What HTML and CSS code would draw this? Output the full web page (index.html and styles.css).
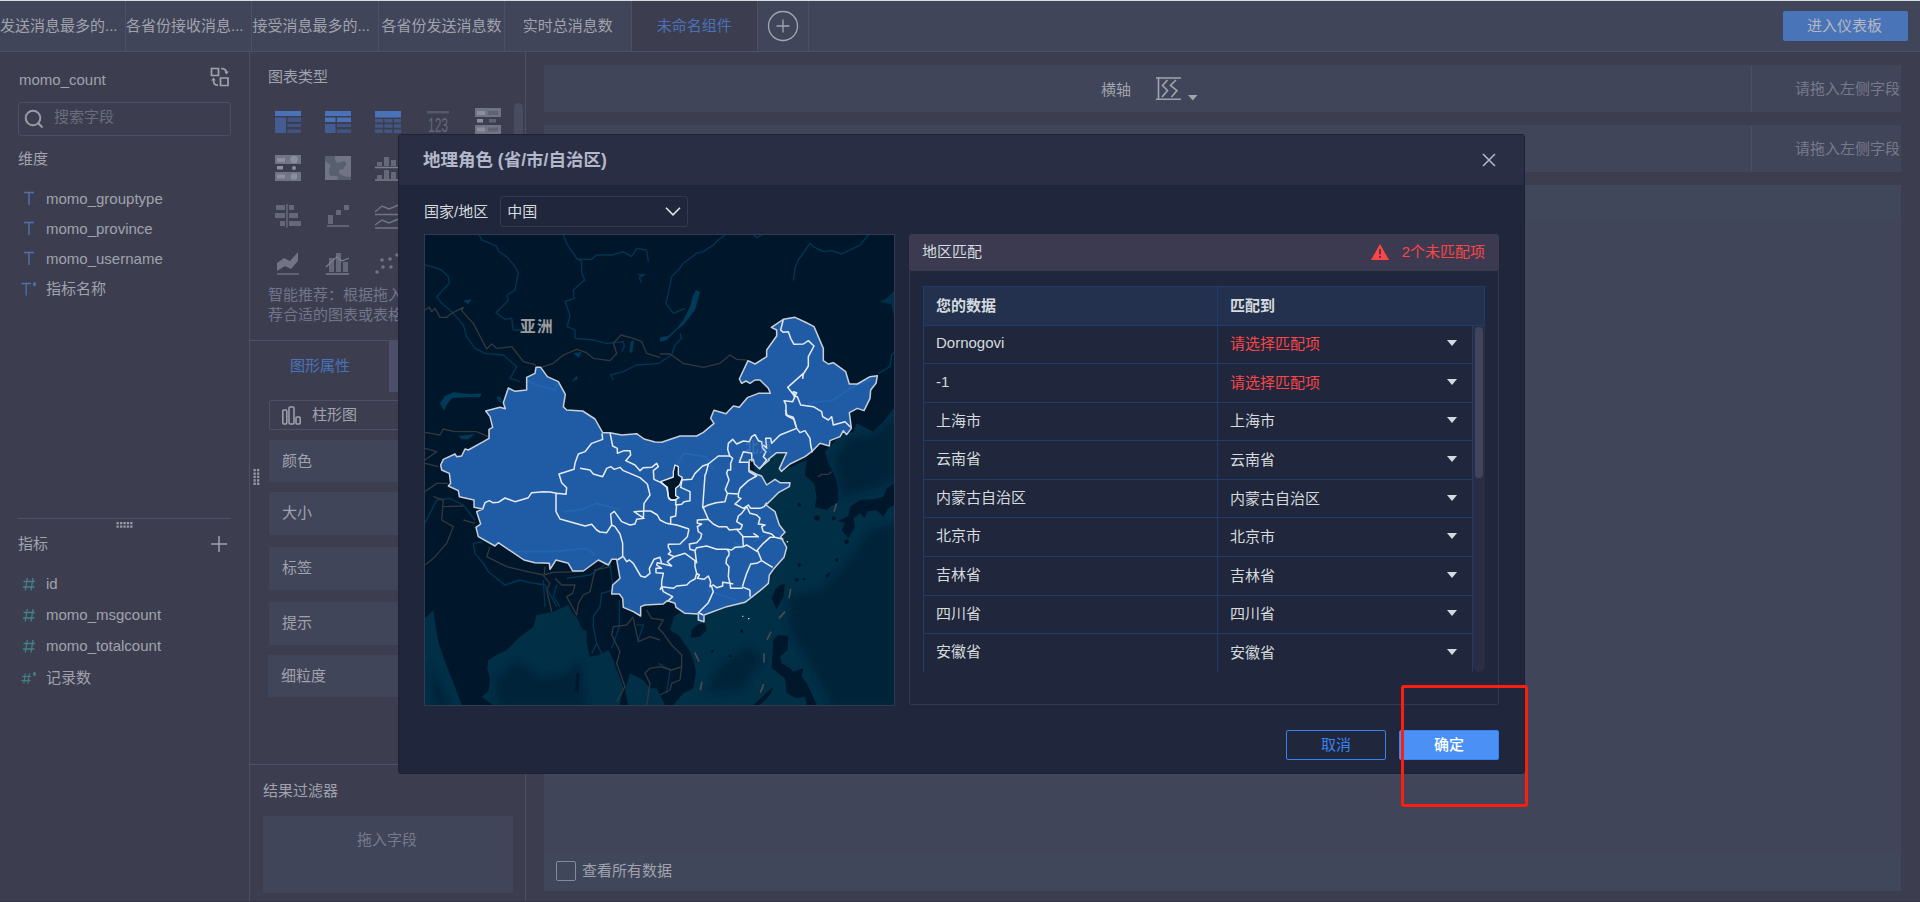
FILE: index.html
```
<!DOCTYPE html>
<html lang="zh-CN">
<head>
<meta charset="utf-8">
<title>未命名组件</title>
<link rel="stylesheet" href="styles.css">
</head>
<body>
<div class="app">
  <header class="topbar">
    <nav class="tabs">
      <div class="tab cut first">发送消息最多的...</div>
      <div class="tab cut">各省份接收消息...</div>
      <div class="tab cut">接受消息最多的...</div>
      <div class="tab">各省份发送消息数</div>
      <div class="tab">实时总消息数</div>
      <div class="tab active">未命名组件</div>
      <div class="tab add"><svg width="32" height="32" viewBox="0 0 32 32" fill="none" stroke="#a3a7b0" stroke-width="1.3"><circle cx="16" cy="16" r="14.5"/><path d="M16 9.500v13M9.500 16h13"/></svg></div>
    </nav>
    <button class="enter">进入仪表板</button>
  </header>

  <div class="workspace">
    <aside class="fields">
      <div class="source"><span>momo_count</span>
        <svg width="20" height="20" viewBox="0 0 20 20" fill="none" stroke="#a0a3ad" stroke-width="1.700"><path d="M1.500 1.500h7v7h-7zM10.500 11h7.500v7.500h-7.500z"/><path d="M11 1.500c4 0 5.500 1.500 5.500 4.500M8 18.200c-3 0-4.500-1.500-4.500-5"/><path d="M14.200 4.500h4.600l-2.300 3zM1.200 13.500h4.600l-2.300-3z" fill="#a0a3ad" stroke="none"/></svg>
      </div>
      <div class="search"><svg width="20" height="20" viewBox="0 0 20 20" fill="none" stroke="#9a9da8" stroke-width="2"><circle cx="9" cy="9" r="7.300"/><path d="M14 14l4.500 4.500"/></svg><span>搜索字段</span></div>
      <div class="caption">维度</div>
      <div class="field"><i class="t"><svg width="16" height="16" viewBox="0 0 16 16" fill="none" stroke="#526fa8" stroke-width="1.500"><path d="M3 1.500h10M8 1.500v12.500"/></svg></i>momo_grouptype</div>
      <div class="field"><i class="t"><svg width="16" height="16" viewBox="0 0 16 16" fill="none" stroke="#526fa8" stroke-width="1.500"><path d="M3 1.500h10M8 1.500v12.500"/></svg></i>momo_province</div>
      <div class="field"><i class="t"><svg width="16" height="16" viewBox="0 0 16 16" fill="none" stroke="#526fa8" stroke-width="1.500"><path d="M3 1.500h10M8 1.500v12.500"/></svg></i>momo_username</div>
      <div class="field"><i class="t"><svg width="16" height="16" viewBox="0 0 16 16" fill="none" stroke="#526fa8" stroke-width="1.300"><path d="M.5 2.500h9.500M5.200 2.500v12M13.500 1.200v4M12 2.200l3 2M15 2.200l-3 2" /></svg></i>指标名称</div>

      <div class="measures">
        <svg class="grip" width="17" height="6" viewBox="0 0 17 6" fill="#9699a5"><path d="M.5 0h2.300v2.300H.5zM4 0h2.300v2.300H4zM7.400 0h2.300v2.300H7.400zM10.800 0h2.300v2.300h-2.300zM14.200 0h2.300v2.300h-2.300zM.5 3.500h2.300v2.300H.5zM4 3.500h2.300v2.300H4zM7.400 3.500h2.300v2.300H7.400zM10.800 3.500h2.300v2.300h-2.300zM14.200 3.500h2.300v2.300h-2.300z"/></svg>
        <div class="mhead"><span>指标</span><svg width="16" height="16" viewBox="0 0 16 16" stroke="#a0a3ad" stroke-width="1.500"><path d="M8 0v16M0 8h16"/></svg></div>
        <div class="field m"><i><svg width="16" height="16" viewBox="0 0 16 16" fill="none" stroke="#418285" stroke-width="1.300"><path d="M6.300 2L4.300 14.500M12 2l-2 12.500M2.500 5.500h11.500M2 11h11.500"/></svg></i>id</div>
        <div class="field m"><i><svg width="16" height="16" viewBox="0 0 16 16" fill="none" stroke="#418285" stroke-width="1.300"><path d="M6.300 2L4.300 14.500M12 2l-2 12.500M2.500 5.500h11.500M2 11h11.500"/></svg></i>momo_msgcount</div>
        <div class="field m"><i><svg width="16" height="16" viewBox="0 0 16 16" fill="none" stroke="#418285" stroke-width="1.300"><path d="M6.300 2L4.300 14.500M12 2l-2 12.500M2.500 5.500h11.500M2 11h11.500"/></svg></i>momo_totalcount</div>
        <div class="field m"><i><svg width="16" height="16" viewBox="0 0 16 16" fill="none" stroke="#418285" stroke-width="1.200"><path d="M4.300 3.500L2.800 13.500M8.300 3.500L6.800 13.500M1 6.500h9M.5 10.700h9M13.500 2v4M12 3l3 2M15 3l-3 2"/></svg></i>记录数</div>
      </div>
    </aside>

    <section class="config">
      <svg class="vgrip" width="7" height="16" viewBox="0 0 7 16" fill="#9699a5"><path d="M.5 0h2.300v2.300H.5zM4 0h2.300v2.300H4zM.5 3.400h2.300v2.300H.5zM4 3.400h2.300v2.300H4zM.5 6.800h2.300v2.300H.5zM4 6.800h2.300v2.300H4zM.5 10.200h2.300v2.300H.5zM4 10.200h2.300v2.300H4zM.5 13.600h2.300v2.300H.5zM4 13.600h2.300v2.300H4z"/></svg>
      <div class="chead">图表类型</div>
      <div class="types">
        <svg viewBox="0 0 26 26"><path fill="#4a72b8" d="M0 3h26v5H0z"/><path fill="#435d94" d="M0 9.500h11V25H0z"/><path fill="#405482" d="M12.500 9.500H26V14H12.500zM12.500 16H26v3H12.500zM12.500 21.500H26V25H12.500z"/></svg>
        <svg viewBox="0 0 26 26"><path fill="#4a72b8" d="M0 3h26v5H0zM0 9.500h10.500V14H0zM12 9.500h14V14H12z"/><path fill="#435d94" d="M0 16h10.500v9H0z"/><path fill="#405482" d="M12 16h14v3H12zM12 21.500h14V25H12z"/></svg>
        <svg viewBox="0 0 26 26"><path fill="#4a72b8" d="M0 3h26v6.500H0z"/><path fill="#435784" d="M0 11h8v3.500H0zM9.500 11h8v3.500h-8zM19 11h7v3.500h-7zM0 16.300h8v3.500H0zM9.500 16.300h8v3.500h-8zM19 16.300h7v3.500h-7zM0 21.500h8V25H0zM9.500 21.500h8V25h-8zM19 21.500h7V25h-7z"/></svg>
        <svg viewBox="0 0 26 26"><path fill="#56596b" d="M2 3h22v2.500H2z"/><text x="3" y="23.500" class="num" textLength="20" lengthAdjust="spacingAndGlyphs">123</text></svg>
        <svg viewBox="0 0 26 26"><path fill="#717484" d="M0 0h26v9H0zM0 17h26v9H0z"/><path fill="#8b8e9b" d="M2 3h8v4H2zM2 11h6v3.500H2zM2 19.500h8v4H2z"/><path fill="#5f6273" d="M13 3h10v4H13zM14 11h7v3.500h-7zM13 19.500h10v4H13z"/></svg>
        <svg viewBox="0 0 26 26"><path fill="#717484" d="M0 0h26v9H0zM0 17h26v9H0z"/><path fill="#8b8e9b" d="M2 3h8v4H2zM2 11h6v3.500H2zM2 19.500h8v4H2z"/><g fill="#8b8e9b"><circle cx="19" cy="4.500" r="3.800"/><circle cx="19" cy="13" r="2"/><circle cx="19" cy="21.500" r="3.300"/></g></svg>
        <svg viewBox="0 0 26 26"><path fill="#717484" d="M0 1h26v24H0z"/><path fill="#575f70" d="M10 1c-1 6 3 8 6 6s6 0 5 3-6 3-7 6 4 6 12 6v3H12c3-2 0-5-4-4S3 16 5 12 0 8 0 5V1zM16 12c1-2 4-1 3 1s-4 2-3-1z"/></svg>
        <svg viewBox="0 0 26 26"><path fill="#656878" d="M2 7h5v4H2zM9 2h5v9H9zM16 5h5v6h-5zM2 20h5v4H2zM9 15h5v9H9zM16 17h5v7h-5z"/><path stroke="#7b7e8c" stroke-width="1.500" d="M0 12.500h26M0 25h26"/></svg>
        <svg></svg><svg></svg>
        <svg viewBox="0 0 26 26"><path fill="#656878" d="M1 2h9v5H1zM14 2h5v5h-5zM0 10h10v5H0zM14 10h9v5h-9zM5 18h5v5H5zM14 18h12v5H14z"/><path stroke="#7b7e8c" d="M12 1v23.500"/></svg>
        <svg viewBox="0 0 26 26"><path fill="#656878" d="M3 12h5v9H3zM11 7h5v5h-5zM19 2h5v5h-5z"/><path stroke="#7b7e8c" stroke-width="1.200" d="M2 23h22"/></svg>
        <svg viewBox="0 0 26 26" fill="none" stroke="#717484" stroke-width="1.500"><path d="M0 9l7-6 7 3 12-5M0 11.500h26M0 22l7-5 7 3 12-5M0 25h26"/></svg>
        <svg></svg><svg></svg>
        <svg viewBox="0 0 26 26"><path fill="#717484" d="M2 21v-8l7-5 6 3 8-9v9l-7 8-6-3z"/><path stroke="#7b7e8c" stroke-width="1.200" d="M2 24h22"/></svg>
        <svg viewBox="0 0 26 26"><path fill="#656878" d="M4 8h5v14H4zM11 3h5v19h-5zM18 12h5v10h-5z"/><path fill="none" stroke="#7b7e8c" stroke-width="1.300" d="M1 17l6-6 5-4 5 4 7-3M1 24h23"/></svg>
        <svg viewBox="0 0 26 26"><g fill="#717484"><circle cx="2" cy="22" r="1.800"/><circle cx="8" cy="17" r="1.800"/><circle cx="7" cy="10" r="1.800"/><circle cx="15" cy="9" r="1.800"/><circle cx="16" cy="17" r="1.800"/><circle cx="22" cy="5" r="1.800"/></g></svg>
        <svg></svg><svg></svg>
      </div>
      <span class="typescroll"></span>
      <div class="hint">智能推荐：根据拖入<br>荐合适的图表或表格</div>
      <div class="ctabs"><span>图形属性</span><b></b></div>
      <div class="kind"><svg width="19" height="19" viewBox="0 0 19 19" fill="none" stroke="#a0a3ad" stroke-width="1.500"><rect x=".8" y="4" width="4" height="14" rx="1"/><rect x="7" y="1" width="5" height="17" rx="1"/><rect x="14" y="11" width="4.200" height="7" rx="1"/></svg>柱形图</div>
      <div class="props">
        <div class="prop">颜色</div><div class="prop">大小</div><div class="prop">标签</div><div class="prop">提示</div><div class="prop last">细粒度</div>
      </div>
      <div class="filter"><div>结果过滤器</div><p>拖入字段</p></div>
    </section>

    <main class="canvas">
      <div class="axis"><div class="axname"><span>横轴</span><svg width="42" height="26" viewBox="0 0 42 26" fill="none" stroke="#a0a3ad" stroke-width="1.600"><path d="M0 2h25M0 23.300h25M2.500 1v23M11.500 4L6.500 9.500l5 5-5.500 6.500M20 4l-5.500 5.500 6.500 5-5.500 6.500"/><path d="M32 19h9.500l-4.700 5.500z" fill="#a0a3ad" stroke="none"/></svg></div><div class="drop">请拖入左侧字段</div></div>
      <div class="axis"><div class="axname"></div><div class="drop">请拖入左侧字段</div></div>
      <div class="board"><div class="bhead"></div><div class="bbody"></div><div class="bfoot"><i></i><span>查看所有数据</span></div></div>
    </main>
  </div>

  <div class="modal">
    <div class="mtitle"><span>地理角色 (省/市/自治区)</span><svg width="14" height="14" viewBox="0 0 14 14" stroke="#b3b8ca" stroke-width="1.500"><path d="M1 1l12 12M13 1L1 13"/></svg></div>
    <div class="country"><label>国家/地区</label><div class="select">中国<svg width="16" height="9" viewBox="0 0 16 9" fill="none" stroke="#e0e5e8" stroke-width="1.600"><path d="M1 .8l7 7 7-7"/></svg></div></div>
    <div class="mbody">
      <div class="map">
        <svg width="470" height="470" viewBox="15 15 1410 1410" fill="none" stroke-linejoin="round">
          <defs><path id="china" d="M65 720L62 705L70 688L105 672L110 680L125 678L135 657L145 660L190 635L207 625V598L218 592L210 560L197 543L240 532L256 536L250 518L265 474L285 484L320 480V442L345 430L348 412H362L382 440L415 455L436 493L430 530L440 540L488 543L525 567L548 608H570L605 615L650 611L672 627L705 636L725 637L780 618H830L850 607L882 580L872 565L882 541L918 551L940 528L958 532L982 503L1015 490H1051L1045 475L1020 450H1005L990 460L978 453L965 460L958 447L984 392L1005 402L1040 380V360L1070 318V300L1054 292L1090 268L1125 262L1155 276L1182 290L1210 355V392L1225 402L1240 398L1277 425L1288 462H1312L1350 440L1372 437L1368 460L1352 480L1350 505L1332 542L1312 535L1288 548L1294 595L1280 614L1270 602L1260 620L1230 632L1228 648L1200 640L1175 665L1155 680L1110 702L1084 724L1078 716L1100 668H1070L1045 688L1048 690L1018 716L1003 702L1000 688L988 690L986 720L1008 732L1025 738L1040 765L1065 748L1080 758H1110L1108 770L1075 788L1038 825L1065 845L1078 885L1095 907L1082 920L1100 952L1092 982L1060 1018L1048 1035L1045 1060L1020 1082L975 1117L920 1130L852 1155V1175L835 1170V1152L795 1150L768 1132L765 1120L742 1112L730 1122L675 1125L662 1130V1158L640 1145L610 1132L608 1105L598 1092H575L578 1065L600 1045L590 988H575L565 1005L535 990L490 1023H458L445 1000L408 990L390 1018L388 1000L345 998L312 990L275 965L235 938L225 948L175 920L168 892L182 882L170 845L188 837L162 832V810L118 800L115 782L85 768L92 760L88 730Z"/>
          <clipPath id="cp"><use href="#china"/></clipPath>
          <filter id="soft" x="-10%" y="-10%" width="120%" height="120%"><feGaussianBlur stdDeviation="9"/></filter></defs>
          <rect x="15" y="15" width="1410" height="1410" fill="#00172b"/>
          <path fill="#002f46" d="M15 1165L40 1140L48 1195L55 1235L70 1280L85 1320L105 1370L125 1425H15zM220 1425L185 1400L205 1385L210 1350L202 1315L205 1290L230 1275L260 1260L300 1220L340 1190L350 1155L400 1145L445 1125L455 1145L470 1160L485 1195L500 1205V1240L510 1280L535 1275L565 1260L580 1290L590 1320L610 1370L600 1425zM625 1425L615 1380L630 1330L670 1350L690 1375L710 1375L735 1425zM960 680L1100 640L1084 724L1160 690L1155 740L1140 720L1155 735L1180 750L1190 800L1185 830L1220 840L1255 810L1250 750L1225 700L1215 665L1240 640L1260 615L1300 605L1310 580L1360 605L1390 575L1425 530V1425H760L790 1390L820 1375L828 1325L820 1290L810 1265L775 1215L750 1200L762 1160L800 1130L900 1000L980 800L960 720z"/>
          <g fill="#002439" filter="url(#soft)" opacity=".85"><path d="M1240 690L1290 620L1360 615L1430 555V750L1360 775L1270 800zM1110 1095L1200 1080L1270 1010L1350 900L1430 880V1430H1240L1170 1300L1105 1190zM235 1430L225 1350L290 1290L360 1340L440 1330L480 1290L500 1430zM890 1320L980 1250L1030 1290L960 1380L860 1390zM40 1430L30 1300L90 1430z"/></g>
          <g fill="#00172b"><path d="M1155 735L1170 720L1220 730L1240 750L1255 775L1252 820L1210 838L1185 830L1200 790L1190 765L1175 755zM1255 872L1285 858L1290 830L1320 810L1360 808L1390 800L1400 775L1425 760V825L1405 835L1390 860L1370 840L1340 845L1335 865L1320 850L1300 865L1305 890L1290 915L1285 925L1265 900L1275 880zM1055 1105L1065 1080L1080 1065L1095 1062L1090 1100L1070 1138zM815 1200L835 1182L855 1180L860 1200L840 1220L812 1223zM1060 1230L1075 1215L1105 1218L1102 1260L1080 1280L1085 1300L1110 1315L1120 1325L1150 1315L1145 1340L1160 1360L1170 1380L1190 1425H1160L1155 1400L1130 1405L1100 1390L1095 1345L1055 1315zM1000 1425L1060 1370L1050 1395L1020 1425z"/><circle cx="1138" cy="824" r="5"/><circle cx="1191" cy="864" r="8"/><circle cx="1241" cy="865" r="6"/><circle cx="1280" cy="935" r="7"/><circle cx="1250" cy="990" r="5"/><path d="M1217 1036l14-10-3 12-10 4z"/><circle cx="1138" cy="1005" r="5"/><circle cx="1130" cy="1049" r="6"/><circle cx="1152" cy="1047" r="4"/><circle cx="965" cy="1203" r="5"/><circle cx="877" cy="1264" r="4"/><circle cx="930" cy="1278" r="4"/><path d="M470 1330h8l-3 60-10-10z"/></g>
          <g stroke="#003e5e" stroke-width="4" opacity=".8"><path d="M178 15L185 30L205 38L228 48L235 62L265 85L285 110L295 130L285 180L262 195L264 212L228 248L255 268L275 265L280 300H310M15 105L45 113L65 120L85 140L88 160L50 200L65 220L95 245L130 285L140 320L165 355L195 370L250 375L290 410L270 445L300 455M430 15L440 40L470 85L485 95L485 130L494 150L460 180L462 205L435 215L450 255L442 290L465 300L465 325L520 330L560 340L610 335L613 350L605 365M470 88H515L530 75L575 75L610 65L635 80L650 55L680 60L685 95M720 400L650 405L610 425L572 435L580 450M655 135L675 133L658 143L665 158M915 15L895 30L880 45L850 65L830 70L790 100L775 120L755 140L738 220L760 250L795 235M780 310L785 325L765 345L755 375L720 398M1120 152L1125 115L1135 90L1170 40L1180 50L1210 65L1235 62L1265 72L1300 55L1320 45L1345 15M1425 365L1415 375L1410 410L1375 430M1000 15L1010 22L1025 15M15 880L50 810L90 805L130 825L165 870M190 935L160 940L165 970L190 1000L205 1025L255 1065L300 1050L330 1058L375 1065L410 1130M370 1050L375 1130M410 1065L400 1100L420 1130M440 1045L510 1035L560 1000M570 1000L580 1080L545 1090L540 1130L520 1160V1190L530 1240L515 1270M530 1240L545 1270M715 1300L750 1320L740 1390M598 1110V1190L575 1255M650 1185H670L655 1230"/></g>
          <path fill="#003a59" d="M60 520L75 498L100 487L150 493L185 490L180 502L140 502L95 505L80 525L72 542zM130 212l25-5-10 16zM115 618l50-6-20 16h-20zM460 370l25-4-8 18zM455 455l15-18 3 10zM632 335l10-5-6 40-8-5zM720 322L745 318L770 295L790 270L810 230L818 200L828 180L840 185L832 215L825 240L790 285L770 300L740 330L720 335zM230 500l12 0 4 20-12-8z"/><path fill="#002f46" d="M1380 215L1400 205L1425 180V265L1412 222z"/>
          <g stroke="#33373f" stroke-width="4"><path d="M15 240L28 232L35 245L45 235L60 262L80 262L95 250L130 232L125 242L160 280L200 357L215 342L230 355L275 350L295 375L310 395L348 405M362 413L400 400L430 375L470 358L500 368L520 385L570 392L590 370L580 340L603 315L640 325L665 335L680 370L720 382M720 372L750 372L790 400L850 412L900 400L930 375L950 388L980 390M15 607L60 615L70 597L105 605L170 605L205 620M15 655L50 665L15 690M15 700L55 710M15 785L50 760L85 760M40 800L70 810L65 870L100 890L80 940L40 985L15 1005M70 830L130 828M130 870L165 880M210 950L200 980L260 1010L310 1022L370 1035L400 1027L480 1025M375 1010L372 1040L390 1060L380 1080L395 1145M405 1045L425 1065H465L458 1090L440 1100L470 1155L475 1120L490 1095L510 1085L525 1020L570 1010M640 1160L620 1185L580 1190L575 1215L600 1265L590 1300L615 1370L590 1415M640 1165L655 1235L690 1220L720 1230M680 1140L695 1165L730 1170L715 1195L730 1210L755 1245L785 1275V1310L780 1350L755 1360L750 1380L720 1395M680 1425L690 1360L675 1330L690 1315L720 1310L755 1320L785 1310M1195 740L1205 733L1225 733L1235 725"/></g>
          <g stroke="#4b4c50" stroke-width="5"><path d="M1250 820l-8 25M1112 1077l-5 28M1095 1145l-18 20M1053 1205l-12 25M1032 1270v28M1031 1362l-10 26M824 1267l13 28M846 1355l-5 25"/></g>
          <use href="#china" fill="#205ba6"/>
          <g clip-path="url(#cp)" stroke="#2367b2" stroke-width="5"><path d="M320 450L350 465L405 480L415 455M275 965H400L500 955L525 975M430 845L480 840L530 820L600 840M770 710L790 670L860 680L880 720M860 1080L950 1110M1165 520L1240 510L1290 475L1350 450M1000 935L1060 900L1110 930M940 935L980 960"/></g>
          <g transform="translate(480 540)">
            <path fill="#00172b" stroke="#e2e9ee" stroke-width="4" d="M285 165l10 5v25l12 8-8 22-12 10v22l10 6-15 8-15-4-7-35-18-17 38-14V185z"/>
            <path fill="#00172b" d="M507 150l12-8 5 40-17 2z"/>
            <g stroke="#e6ecf3" stroke-width="4.500">
              <path d="M-292 297L-285 278L-272 272L-262 278L-245 277L-225 264L-195 275L-170 268L-155 263L-145 248L-110 245L-90 246L-70 250L-42 253L-40 233L-55 218L-63 192L-18 178L-15 160L-5 132L15 125L35 100L68 88L66 70M0 175L30 180L40 192L68 200L80 175L92 170L103 178L120 172L130 182L150 190L180 203L202 222L210 255L192 280L190 325M-72 250V305L-60 327L15 348L35 343L50 360L60 366L80 368L95 345L105 350L120 372L128 400V440L112 450M95 345L92 312L103 304L125 335L150 345L165 342L170 328L192 325L162 305L190 303L212 303L232 315L240 330L260 340L270 342L290 345L327 357M90 68L98 108L112 115V130L132 122L150 122L152 135L137 152L165 165L180 182L190 173L215 172L230 160L235 170L220 182L222 208L243 218L262 232L265 262L272 270L288 270L287 285L305 283L312 275L330 272V245L302 232L306 210L335 208L345 190L368 168L385 162M290 282L287 318L272 322V342M385 162L378 190L375 195L368 293L385 285L408 278L435 275L442 250L436 238L447 210L440 190L443 180H452V160L458 145L450 138H415L385 162M450 140L443 118L445 100L458 88L470 102L490 93L508 95L515 80L525 74L535 92L545 95L548 115L558 125L550 140L560 150L538 178M440 250L475 252L480 235L505 212L530 198L507 185L507 157H478L490 125L515 130L516 155M475 252L475 262L483 265L465 282L490 295L505 285L512 295H540L553 290L560 278M370 293L385 328L400 342L415 350L440 350L448 360L470 358L488 378L490 410M488 380L535 380L520 370M500 290L510 310L530 315L540 325L535 342L555 345L545 350L550 365L575 372L585 382L570 382L550 400L532 420L545 452L578 472M500 290L485 310L475 318L470 335L487 345L482 358L470 358M585 382L610 388M385 328L352 330V340L365 342L352 350L355 365L365 372L362 385L350 398L328 402L330 418L345 422L350 413L380 408L410 418L440 418L455 420L465 412L490 410L500 405L512 412L532 425M440 418L447 425V435L440 445L438 460L447 470L445 500L450 520L452 535H485L490 532L510 540M545 452L530 460L512 462L500 490L487 530M510 540V560M327 357L322 380L300 402L265 403V412L272 425L265 432L282 440L315 430L345 452V470L350 490L358 495L352 505L372 508L385 498L392 515L390 530L400 525L410 533L428 528V517L450 520L460 522M345 422L350 460M350 490L345 507L330 515L320 525L290 528L280 535L245 530V515L250 490L228 488L228 475H245L230 465L232 458L250 462L275 468L262 455L282 440M130 440L140 455L148 450L160 460L182 498L195 502L210 490L208 475L222 448L240 442L245 460M245 530L250 545L278 560L262 575M395 530L400 545L385 578L355 608L370 615M245 530L240 540M616 0L622 18L642 28L650 55L600 75L575 100L572 85H557L560 115L550 105M650 55L660 68L675 62L690 85L692 105L697 127"/>
            </g>
          </g>
          <g stroke="#e6ecf3" stroke-width="4.500"><path d="M1090 268L1082 300L1090 307L1105 305L1112 325L1122 343L1150 342L1165 332L1182 348L1165 380V408L1150 432L1148 445L1150 430L1103 472L1125 500L1120 485L1130 488L1118 515L1092 512L1098 525V555L1120 562L1128 590M1120 498L1132 500L1142 525L1180 530L1205 545L1208 560L1225 570L1235 560L1240 585L1275 575L1292 592"/></g>
          <use href="#china" stroke="#c9cfd7" stroke-width="4.500"/>
          <path stroke="#dfe5ea" stroke-width="4" d="M967 1159h3M984 1166h4M1100 935l4 1"/>
          <text x="300" y="307" class="continent" textLength="98">亚洲</text>
          <text x="975" y="665" class="capital" textLength="82">北京</text>
        </svg>
      </div>
      <div class="match">
        <div class="mh"><span>地区匹配</span><div class="warn"><svg width="18" height="16" viewBox="0 0 18 16"><path fill="#fb4547" d="M9 0l9 16H0z"/><path stroke="#3b3a50" stroke-width="1.800" d="M9 5v5.500M9 12v2"/></svg>2个未匹配项</div></div>
        <div class="table">
          <div class="tr th"><div>您的数据</div><div>匹配到</div></div>
          <div class="tbody">
            <div class="rows">
              <div class="tr"><div>Dornogovi</div><div class="red">请选择匹配项</div></div>
              <div class="tr"><div>-1</div><div class="red">请选择匹配项</div></div>
              <div class="tr"><div>上海市</div><div>上海市</div></div>
              <div class="tr"><div>云南省</div><div>云南省</div></div>
              <div class="tr"><div>内蒙古自治区</div><div>内蒙古自治区</div></div>
              <div class="tr"><div>北京市</div><div>北京市</div></div>
              <div class="tr"><div>吉林省</div><div>吉林省</div></div>
              <div class="tr"><div>四川省</div><div>四川省</div></div>
              <div class="tr"><div>安徽省</div><div>安徽省</div></div>
            </div>
            <div class="track"><i></i></div>
          </div>
        </div>
      </div>
    </div>
    <div class="actions"><button class="cancel">取消</button><button class="ok">确定</button></div>
  </div>
  <div class="marker"></div>
</div>
</body>
</html>
```
FILE: styles.css
```
* { box-sizing: border-box; }
body { margin: 0; font: 15px/20px "Liberation Sans", "Noto Sans CJK SC", sans-serif; color: #a0a3ad; background: #3c3e50; }
svg { display: block; flex: none; }
i { font-style: normal; }
button { font: inherit; padding: 0; border-radius: 2px; }
.app { position: relative; width: 1920px; height: 902px; overflow: hidden; display: flex; flex-direction: column; border-top: 1px solid #d5dede; border-bottom: 1px solid #373443; }

.topbar { height: 51px; flex: none; display: flex; justify-content: space-between; background: #414559; border-bottom: 1px solid #4b5068; }
.tabs { display: flex; }
.tab { width: 126.4px; border-right: 1px solid #4b5068; display: flex; align-items: center; justify-content: center; white-space: nowrap; }
.tab.cut { justify-content: flex-start; }
.tab.first { width: 126px; }
.tab.active { background: #3c3e50; color: #4a72b8; }
.tab.add { width: 51px; }
.enter { width: 125px; height: 30px; margin: 10px 12px 0 0; padding-right: 2px; border: 0; background: #4a74b8; color: #b3b8c3; }

.workspace { flex: 1; display: flex; min-height: 0; }
.fields { width: 250px; flex: none; padding: 0 18px; border-right: 1px solid #4b5068; display: flex; flex-direction: column; }
.source { height: 50px; display: flex; justify-content: space-between; align-items: center; padding: 5px 1px 0; }
.source svg { margin-top: -6px; }
.search { height: 34px; flex: none; border: 1px solid #4b5068; border-radius: 3px; display: flex; align-items: center; gap: 10px; padding-left: 5px; color: #6a6d7d; }
.search span { margin-top: -4px; }
.caption { height: 48px; line-height: 46px; padding-left: 0; }
.field { height: 30px; display: flex; align-items: center; gap: 9px; padding-left: 3px; }
.field.m { height: 31.3px; }
.measures { position: relative; margin-top: auto; height: 383px; border-top: 1px solid #4b5068; }
.grip { position: absolute; left: 98px; top: 3px; }
.mhead { height: 49px; display: flex; justify-content: space-between; align-items: center; padding: 0 4px 0 0; }

.config { position: relative; width: 276px; flex: none; border-right: 1px solid #4b5068; display: flex; flex-direction: column; }
.vgrip { position: absolute; left: 3px; top: 417px; }
.chead { height: 45px; line-height: 49px; padding-left: 18px; }
.types { display: grid; grid-template-columns: repeat(5, 50px); grid-auto-rows: 47.500px; place-items: center; padding-left: 13px; }
.types svg { width: 26px; height: 26px; overflow: visible; }
.num { font: 20px/20px "Liberation Sans", sans-serif; fill: #64677a; }
.typescroll { position: absolute; left: 264px; top: 51px; width: 9px; height: 150px; border-radius: 5px; background: #494c60; }
.hint { padding-left: 18px; margin-top: -2px; color: #72758a; height: 55px; }
.ctabs { height: 52px; border-top: 1px solid #4b5068; display: flex; justify-content: space-between; color: #4a72b8; line-height: 50px; padding-left: 40px; }
.ctabs b { width: 136px; height: 51px; background: #4b5068; }
.kind { margin: 8px 18px 0 19px; height: 30px; border: 1px solid #4b5068; border-radius: 2px; display: flex; align-items: center; gap: 11px; padding-left: 12px; }
.props { margin: 10px 18px 0 19px; display: flex; flex-direction: column; gap: 12px; }
.prop { height: 43px; line-height: 41px; padding-left: 13px; background: #414559; }
.prop:first-child { height: 42px; margin-bottom: -2px; }
.prop.last { margin: -2px 0 0 -1px; height: 42px; }
.filter { margin-top: auto; height: 137px; border-top: 1px solid #4b5068; padding: 16px 12px 0 13px; }
.filter p { margin: 15px 0 0; height: 77px; padding: 14px 2px 0 0; background: #414559; text-align: center; color: #777a8b; }

.canvas { flex: 1; padding: 13px 19px 10px 18px; display: flex; flex-direction: column; }
.axis { height: 47px; flex: none; margin-bottom: 13px; background: #414559; display: flex; }
.axname { flex: 1; padding-left: 557px; display: flex; align-items: center; gap: 25px; }
.axname span { margin-top: 2px; }
.axname svg { margin-top: 1px; }
.drop { width: 150px; margin: 1px 0; padding-right: 1px; border-left: 1px solid #4b5068; text-align: right; line-height: 45px; color: #777a8b; }
.board { flex: 1; background: #414559; display: flex; flex-direction: column; }
.bhead { height: 35px; background: #40475b; }
.bbody { flex: 1; }
.bfoot { height: 38px; background: #40475b; display: flex; align-items: center; padding: 0 0 2px 12px; gap: 6px; }
.bfoot i { width: 20px; height: 20px; border: 1px solid #85899a; border-radius: 2px; }

.modal { position: absolute; left: 398px; top: 133px; width: 1127px; height: 640px; background: #20263b; border: 1px solid #1c2136; border-radius: 3px; display: flex; flex-direction: column; color: #d5dbdd; }
.mtitle { height: 50px; flex: none; background: #292e45; display: flex; justify-content: space-between; align-items: center; padding: 0 28px 0 24px; font-size: 17.500px; font-weight: bold; color: #b3b8ca; }
.country { height: 48px; flex: none; display: flex; align-items: flex-end; padding: 0 0 6px 25px; gap: 12px; line-height: 30px; }
.select { width: 188px; height: 31px; border: 1px solid #323a52; border-radius: 3px; padding: 0 6px; display: flex; justify-content: space-between; align-items: center; }
.mbody { display: flex; padding: 1px 25px 0; gap: 14px; height: 473px; }
.map { width: 471px; height: 472px; border: 1px solid #323a52; overflow: hidden; flex: none; }
.continent { font: bold 47px "Noto Sans CJK SC", sans-serif; fill: #9b9b9d; }
.capital { font: bold 41px "Noto Sans CJK SC", sans-serif; fill: #6d96ca; opacity: .3; }
.match { flex: 1; height: 471px; border: 1px solid #323a52; border-radius: 3px; }
.mh { height: 37px; margin: -1px; background: #3b3a50; border-radius: 3px; display: flex; align-items: center; justify-content: space-between; padding: 0 14px 1px 13px; }
.warn { display: flex; gap: 13px; align-items: center; color: #fb4547; }
.table { margin: 16px 13px 0; }
.tr { display: flex; height: 38.600px; border: 1px solid #203c6b; border-top: 0; line-height: 36px; }
.tr > div { width: 253px; padding-left: 12px; }
.tr > div:first-child { width: 294px; border-right: 1px solid #203c6b; }
.tr > div:last-child { flex: 1; }
.tr.th { height: 40px; border-top: 1px solid #203c6b; background: #23304e; font-weight: bold; line-height: 38px; }
.tbody { display: flex; height: 346px; overflow: hidden; }
.rows { flex: 1; margin-top: -.6px; }
.rows .tr > div:last-child { display: flex; justify-content: space-between; align-items: center; padding-right: 15px; }
.rows .tr > div:last-child::after { content: ""; margin-top: -2px; border: 5px solid transparent; border-top: 6px solid #d5dbdd; border-bottom: 0; }
.rows .red { color: #fb4547; }
.track { width: 12px; padding: 1px 2px; background: #292e45; border-radius: 0 0 6px 6px; }
.track i { display: block; width: 8px; height: 151px; border-radius: 4px; background: #414559; }
.actions { display: flex; justify-content: flex-end; gap: 13px; padding: 24px 25px 0; }
.actions button { width: 100px; height: 30px; border: 1px solid #3a82ee; color: #3a82ee; background: none; }
.actions .ok { background: #4b91f5; color: #fff; font-weight: 500; }
.marker { position: absolute; left: 1401px; top: 684px; width: 127px; height: 122px; border: 3px solid #fb1f12; border-radius: 3px; }
```
